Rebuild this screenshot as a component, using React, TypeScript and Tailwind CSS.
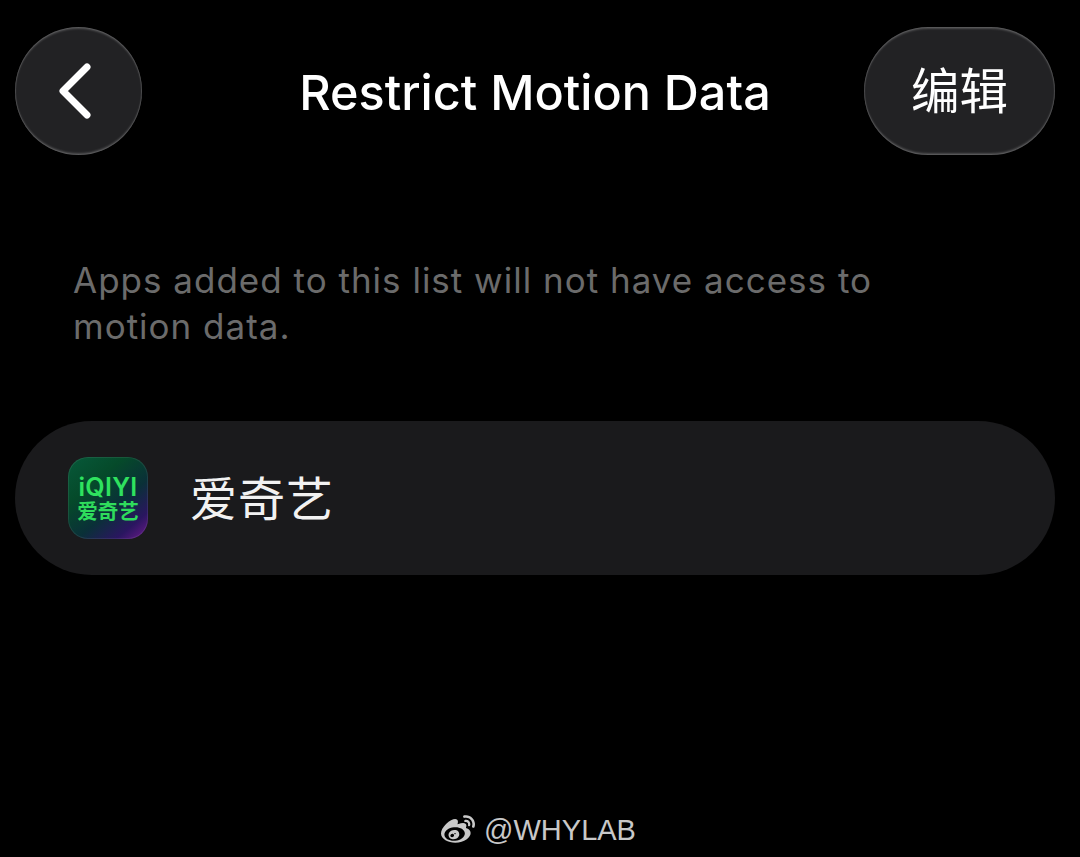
import { FaWeibo } from "react-icons/fa";

const sans = "font-['Inter','Noto_Sans_CJK_SC',sans-serif]";

function AppIcon() {
  return (
    <div className="flex h-[82px] w-[80px] shrink-0 flex-col items-center justify-center rounded-[20px] bg-[linear-gradient(140deg,#07593a_0%,#054a2a_32%,#0a3038_60%,#2a1660_82%,#6e1a8c_100%)] shadow-[inset_0_0_0_1px_#ffffff14]">
      <div className="font-['Inter',sans-serif] text-[25px] leading-[24px] font-semibold tracking-[0.3px] text-[#2fe25f]">iQIYI</div>
      <div className="font-['Noto_Sans_CJK_SC',sans-serif] text-[20.5px] leading-[22px] font-bold text-[#2fdc5c]">爱奇艺</div>
    </div>
  );
}

export default function App() {
  return (
    <div className={`flex h-[857px] w-[1080px] flex-col overflow-hidden bg-black pr-[25px] pl-[15px] text-white ${sans}`}>
      <header className="mt-[27px] flex items-center">
        <button className="flex h-[128px] w-[127px] shrink-0 items-center justify-center rounded-full bg-[#222224] shadow-[inset_0_2px_2px_#ffffff30,inset_0_-2px_2px_#ffffff30,inset_0_0_0_1px_#ffffff14]">
          <svg width="40" height="60" viewBox="0 0 40 60" fill="none" className="mr-[6px]">
            <path d="M31 6 L7 30 L31 54" stroke="#fff" strokeWidth="7" strokeLinecap="round" strokeLinejoin="round" />
          </svg>
        </button>
        <h1 className="flex-1 pt-[3px] pl-[64px] text-center text-[48.5px] leading-[56px] font-medium">Restrict Motion Data</h1>
        <button className="flex h-[128px] w-[191px] shrink-0 items-center justify-center rounded-[64px] bg-[#222224] pt-[2px] text-[48.5px] leading-none font-normal shadow-[inset_0_2px_2px_#ffffff30,inset_0_-2px_2px_#ffffff30,inset_0_0_0_1px_#ffffff14]">
          编辑
        </button>
      </header>
      <p className="mt-[102px] ml-[58px] w-[840px] text-[35px] leading-[46px] tracking-[1px] text-[#6b6b6b]">
        Apps added to this list will not have access to motion data.
      </p>
      <div className="mt-[72px] flex h-[154px] items-center gap-[42px] rounded-[77px] bg-[#1a1a1c] pl-[53px]">
        <AppIcon />
        <span className="text-[47px] leading-none font-normal tracking-[1px] text-[#f2f2f2]">爱奇艺</span>
      </div>
      <footer className="mt-auto mb-[10px] flex items-center justify-center gap-[8px] pl-[6px] text-[#c8c8c8]">
        <FaWeibo className="h-[34px] w-[36px]" />
        <span className="font-['Liberation_Sans',sans-serif] text-[29px] leading-[34px]">@WHYLAB</span>
      </footer>
    </div>
  );
}
